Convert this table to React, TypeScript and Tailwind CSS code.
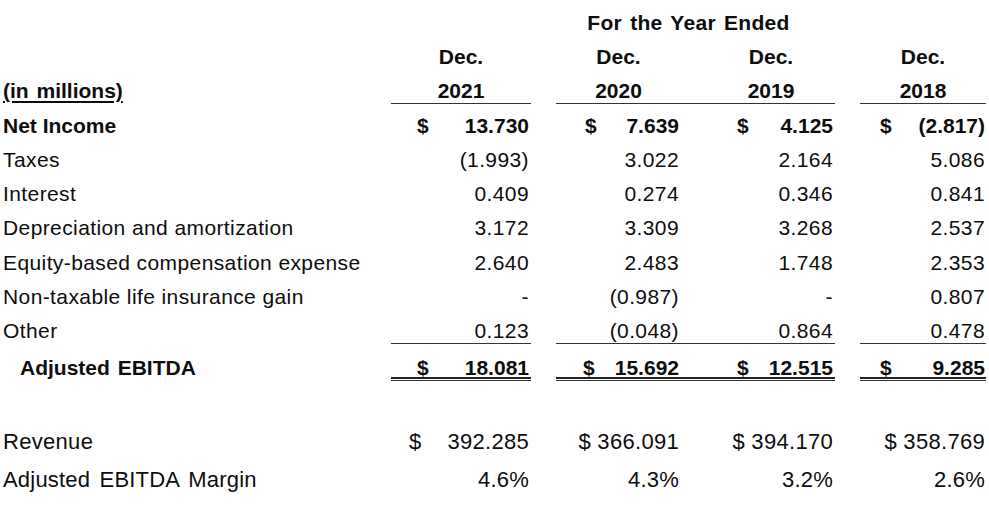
import React from "react";

const GRID =
  "grid grid-cols-[391px_140px_25px_125px_26px_128px_25px_126px]";

type Cell = { s?: boolean; v: string };

const PADS = [
  "pl-[26px] pr-[2px]",
  "pl-[29px] pr-[2px]",
  "pl-[30px] pr-[2px]",
  "pl-[20px] pr-[1px]",
];

function ValueCell({ c, pad, cls }: { c: Cell; pad: string; cls?: string }) {
  return (
    <div className={`flex justify-between ${pad} ${cls ?? ""}`}>
      <span>{c.s ? "$" : ""}</span>
      <span>{c.v}</span>
    </div>
  );
}

function DataRow({
  label,
  vals,
  bold,
  hcls,
}: {
  label: string;
  vals: string[];
  bold?: boolean;
  hcls: string;
}) {
  const cells: Cell[] = vals.map((v) => ({ v, s: bold }));
  return (
    <div className={`${GRID} ${hcls} ${bold ? "font-bold" : "tracking-[0.4px]"}`}>
      <div className="pl-[3px]">{label}</div>
      <ValueCell c={cells[0]} pad={PADS[0]} />
      <div />
      <ValueCell c={cells[1]} pad={PADS[1]} />
      <div />
      <ValueCell c={cells[2]} pad={PADS[2]} />
      <div />
      <ValueCell c={cells[3]} pad={PADS[3]} />
    </div>
  );
}

function DoubleCell({ c, pad }: { c: Cell; pad: string }) {
  return (
    <div className="border-b border-[#333] pb-px">
      <div className={`h-[33px] pt-[10px] border-b-2 border-[#222] flex justify-between ${pad}`}>
        <span>{c.s ? "$" : ""}</span>
        <span>{c.v}</span>
      </div>
    </div>
  );
}

function DoubleGap() {
  return (
    <div className="border-b border-[#333] pb-px">
      <div className="h-[33px] border-b-2 border-[#222]" />
    </div>
  );
}

export default function App() {
  return (
    <div className="w-[989px] h-[507px] overflow-hidden bg-white text-[#0d0d0d] font-['Liberation_Sans',Arial,sans-serif] text-[21px] leading-[24px]">
      {/* For the Year Ended */}
      <div className="grid grid-cols-[391px_595px] h-[40px] pt-[11px] font-bold">
        <div />
        <div className="text-center tracking-[0.3px] [word-spacing:2px]">For the Year Ended</div>
      </div>

      {/* Dec. */}
      <div className={`${GRID} h-[34px] pt-[5px] font-bold text-center`}>
        <div />
        <div>Dec.</div>
        <div />
        <div>Dec.</div>
        <div />
        <div>Dec.</div>
        <div />
        <div>Dec.</div>
      </div>

      {/* Years */}
      <div className={`${GRID} h-[34px] font-bold`}>
        <div className="pl-[3px] pt-[5px]">
          <span className="underline decoration-[2px] underline-offset-[3px] [word-spacing:2px]">
            (in millions)
          </span>
        </div>
        <div className="h-[30px] pt-[5px] border-b border-[#333] text-center">2021</div>
        <div />
        <div className="h-[30px] pt-[5px] border-b border-[#333] text-center">2020</div>
        <div className="h-[30px] border-b border-[#333]" />
        <div className="h-[30px] pt-[5px] border-b border-[#333] text-center">2019</div>
        <div />
        <div className="h-[30px] pt-[5px] border-b border-[#333] text-center">2018</div>
      </div>

      <DataRow
        label="Net Income"
        bold
        hcls="h-[34px] pt-[6px]"
        vals={["13.730", "7.639", "4.125", "(2.817)"]}
      />
      <DataRow
        label="Taxes"
        hcls="h-[34px] pt-[6px]"
        vals={["(1.993)", "3.022", "2.164", "5.086"]}
      />
      <DataRow
        label="Interest"
        hcls="h-[34px] pt-[6px]"
        vals={["0.409", "0.274", "0.346", "0.841"]}
      />
      <DataRow
        label="Depreciation and amortization"
        hcls="h-[34px] pt-[6px]"
        vals={["3.172", "3.309", "3.268", "2.537"]}
      />
      <DataRow
        label="Equity-based compensation expense"
        hcls="h-[34px] pt-[7px]"
        vals={["2.640", "2.483", "1.748", "2.353"]}
      />
      <DataRow
        label="Non-taxable life insurance gain"
        hcls="h-[34px] pt-[7px]"
        vals={["-", "(0.987)", "-", "0.807"]}
      />

      {/* Other with underline */}
      <div className={`${GRID} h-[34px] tracking-[0.4px]`}>
        <div className="pl-[3px] pt-[7px]">Other</div>
        <ValueCell c={{ v: "0.123" }} pad={PADS[0]} cls="h-[32px] pt-[7px] border-b border-[#333]" />
        <div />
        <ValueCell c={{ v: "(0.048)" }} pad={PADS[1]} cls="h-[32px] pt-[7px] border-b border-[#333]" />
        <div className="h-[32px] border-b border-[#333]" />
        <ValueCell c={{ v: "0.864" }} pad={PADS[2]} cls="h-[32px] pt-[7px] border-b border-[#333]" />
        <div />
        <ValueCell c={{ v: "0.478" }} pad={PADS[3]} cls="h-[32px] pt-[7px] border-b border-[#333]" />
      </div>

      {/* Adjusted EBITDA */}
      <div className={`${GRID} h-[35px] font-bold`}>
        <div className="pl-[20px] pt-[10px] [word-spacing:2px]">Adjusted EBITDA</div>
        <DoubleCell c={{ s: true, v: "18.081" }} pad="pl-[26px] pr-[2px]" />
        <div />
        <DoubleCell c={{ s: true, v: "15.692" }} pad="pl-[27px] pr-[2px]" />
        <DoubleGap />
        <DoubleCell c={{ s: true, v: "12.515" }} pad="pl-[30px] pr-[2px]" />
        <div />
        <DoubleCell c={{ s: true, v: "9.285" }} pad="pl-[20px] pr-[1px]" />
      </div>

      <div className="h-[42px]" />

      {/* Revenue */}
      <div className={`${GRID} h-[38px] pt-[6px] text-[22px] leading-[26px] tracking-[0.3px]`}>
        <div className="pl-[3px]">Revenue</div>
        <div className="flex justify-between pl-[18px] pr-[2px]">
          <span>$</span>
          <span>392.285</span>
        </div>
        <div />
        <div className="text-right pr-[2px]">$ 366.091</div>
        <div />
        <div className="text-right pr-[2px]">$ 394.170</div>
        <div />
        <div className="text-right pr-[1px]">$ 358.769</div>
      </div>

      {/* Margin */}
      <div className={`${GRID} h-[38px] pt-[6px] text-[22px] leading-[26px] tracking-[0.2px]`}>
        <div className="pl-[3px] [word-spacing:3px]">Adjusted EBITDA Margin</div>
        <div className="text-right pr-[2px]">4.6%</div>
        <div />
        <div className="text-right pr-[2px]">4.3%</div>
        <div />
        <div className="text-right pr-[2px]">3.2%</div>
        <div />
        <div className="text-right pr-[1px]">2.6%</div>
      </div>
    </div>
  );
}
